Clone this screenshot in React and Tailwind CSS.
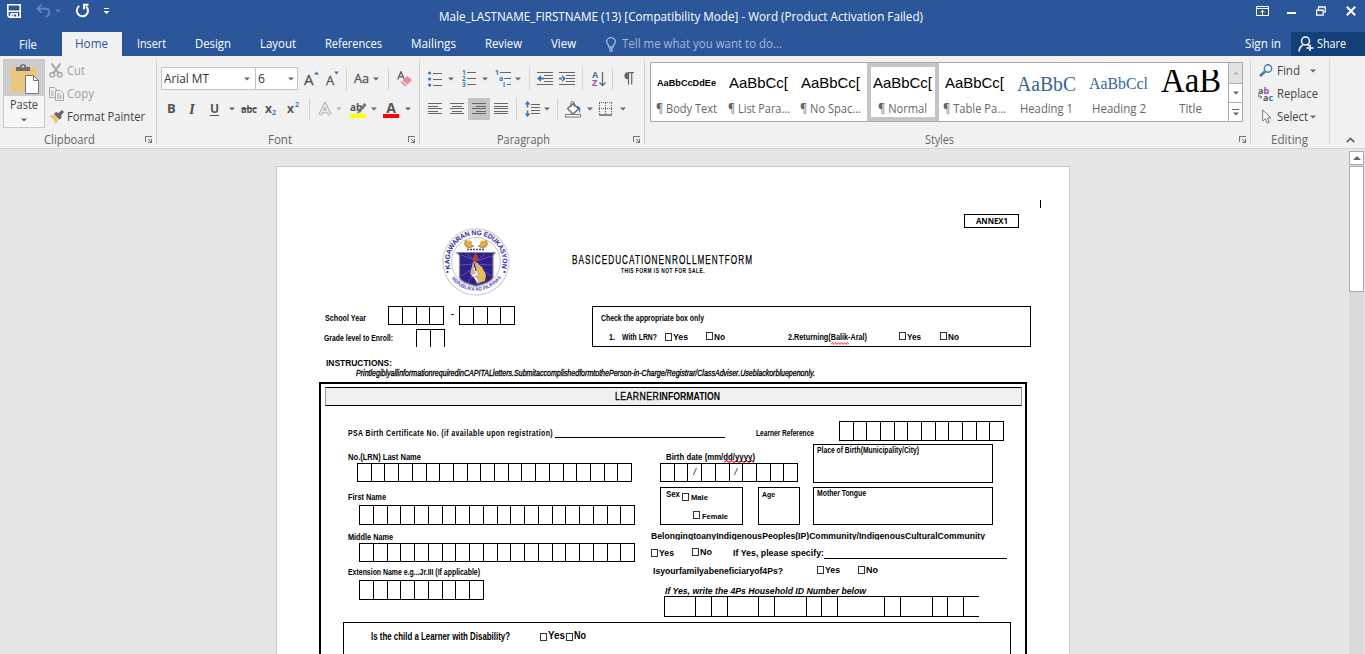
import { useLayoutEffect, useRef } from "react";

/* One line of text whose glyph run is fitted to the width given by its class. */
function Fit({ className = "", children }) {
  const outer = useRef(null);
  const inner = useRef(null);
  useLayoutEffect(() => {
    inner.current.style.transform = "none";
    const natural = inner.current.getBoundingClientRect().width;
    const room = outer.current.getBoundingClientRect().width;
    if (natural > 0) inner.current.style.transform = `scaleX(${room / natural})`;
  });
  return (
    <span ref={outer} className={`block shrink-0 whitespace-nowrap leading-[14px] ${className}`}>
      <span ref={inner} className="inline-block origin-left">{children}</span>
    </span>
  );
}

const Caret = ({ className = "" }) => (
  <svg className={`shrink-0 ${className}`} width="6" height="4" viewBox="0 0 6 4"><path d="M0 .5h6L3 3.5z" fill="#666" /></svg>
);
const Sep = ({ className = "" }) => <div className={`w-px shrink-0 bg-[#d2d2d2] ${className}`} />;
const Launcher = ({ className = "" }) => (
  <svg className={`shrink-0 ${className}`} width="8" height="8" viewBox="0 0 8 8" fill="none" stroke="#777" shapeRendering="crispEdges">
    <path d="M.5 6V.5H7" /><path d="M3 3l3 3" shapeRendering="auto" /><path d="M6.5 3v3.5H3" /><path d="M5 5h2v2H5z" fill="#777" stroke="none" />
  </svg>
);
const Cell = ({ className = "", children }) => <div className={`flex shrink-0 items-center ${className}`}>{children}</div>;

function TitleBar() {
  return (
    <div className="flex h-8 items-start">
      <svg className="mt-1 ml-[7px] shrink-0" width="14" height="14" viewBox="0 0 14 14" fill="none" stroke="#fff" strokeWidth="1.6">
        <path d="M.8.8h12.4v12.4H2.5L.8 11.6z" /><path d="M1 7.3h12M4 13v-3.2h6V13" /><path d="M6.2 10.5V13" strokeWidth="1.4" />
      </svg>
      <svg className="mt-1 ml-[15px] shrink-0" width="15" height="14" viewBox="0 0 15 14" fill="none" stroke="#5f83bd" strokeWidth="2">
        <path d="M5.5 0.8L1.5 4.6l4 4M2 4.7h7c6 0 5.5 6.5.5 8" />
      </svg>
      <svg className="mt-[9px] ml-1 shrink-0" width="6" height="4" viewBox="0 0 6 4"><path d="M0 .5h6L3 3.5z" fill="#5f83bd" /></svg>
      <svg className="mt-[3px] ml-[14px] shrink-0" width="15" height="15" viewBox="0 0 15 15" fill="none" stroke="#fff" strokeWidth="2">
        <path d="M4.3 3A5.6 5.6 0 1 0 11 3.4" /><path d="M13.5 1.8H9v4.4" />
      </svg>
      <svg className="mt-2 ml-[13px] shrink-0" width="7" height="6" viewBox="0 0 7 6" fill="#fff"><path d="M1 0h5v1H1zM.5 3h6l-3 3z" /></svg>
      <Fit className="mt-[10px] ml-[329px] w-[484px] text-[12px] text-white">Male_LASTNAME_FIRSTNAME (13) [Compatibility Mode] - Word (Product Activation Failed)</Fit>
      <svg className="mt-1.5 ml-[333px] shrink-0" width="13" height="10" viewBox="0 0 13 10" fill="none" stroke="#fff">
        <path d="M.5.5h12v9H.5zM.5 2.5h12M6.5 9V4.5M4.5 6.3l2-2 2 2" />
      </svg>
      <div className="mt-[12px] ml-[18px] h-[2px] w-[9px] shrink-0 bg-white" />
      <svg className="mt-1.5 ml-[20px] shrink-0" width="10" height="10" viewBox="0 0 10 10" fill="none" stroke="#fff" strokeWidth="1.2">
        <path d="M.6 4h6.6v5.2H.6zM.6 4.4h6.6M2.5 3.6V.8h6.8v5H7.5M2.5 1.2h6.8" />
      </svg>
      <svg className="mt-1.5 ml-[20px] shrink-0" width="10" height="10" viewBox="0 0 10 10" stroke="#fff" strokeWidth="2"><path d="M.8.8l8.4 8.4M9.2.8L.8 9.2" /></svg>
    </div>
  );
}

function TabBar() {
  return (
    <div className="flex h-6 items-center text-[12px] text-white">
      <Fit className="mt-px ml-[19px] w-[18px]">File</Fit>
      <div className="ml-[25px] flex h-6 w-[60px] shrink-0 items-center bg-[#f1f1f1] text-[#2b579a]"><Fit className="ml-[13px] w-[33px]">Home</Fit></div>
      <Fit className="ml-[15px] w-[29px]">Insert</Fit>
      <Fit className="ml-[29px] w-[36px]">Design</Fit>
      <Fit className="ml-[29px] w-[36px]">Layout</Fit>
      <Fit className="ml-[29px] w-[57px]">References</Fit>
      <Fit className="ml-[29px] w-[45px]">Mailings</Fit>
      <Fit className="ml-[29px] w-[37px]">Review</Fit>
      <Fit className="ml-[29px] w-[25px]">View</Fit>
      <svg className="ml-[30px] shrink-0" width="10" height="15" viewBox="0 0 10 15" fill="none" stroke="#a9bcdb" strokeWidth="1.3">
        <path d="M3 10C3 7.600.7 7 .7 4.800a4.300 4.100 0 0 1 8.600 0C9.300 7 7 7.600 7 10zM3 12h4M3.500 14h3" />
      </svg>
      <Fit className="ml-[6px] w-[160px] text-[#a3b8d9]">Tell me what you want to do...</Fit>
      <Fit className="ml-[463px] w-[36px]">Sign in</Fit>
      <div className="ml-[10px] flex h-6 w-[74px] shrink-0 items-center bg-[#124078]">
        <svg className="ml-[7px] shrink-0" width="16" height="16" viewBox="0 0 16 16" fill="none" stroke="#fff" strokeWidth="1.5">
          <circle cx="7.500" cy="5" r="4" /><path d="M1 15.500c.3-3.500 2-5.500 4-6.500M12 8.500v6.500M8.500 12h7M9.500 8.500l1.500 1.500" />
        </svg>
        <Fit className="ml-[3px] w-[29px]">Share</Fit>
      </div>
    </div>
  );
}

function ClipboardGroup() {
  return (
    <div className="flex h-[92px] w-[156px] shrink-0 flex-col">
      <div className="flex h-[75px]">
        <div className="mt-[3px] ml-[3px] flex h-[69px] w-[42px] shrink-0 flex-col items-center border border-[#c8c8c8] bg-[#f6f6f6]">
          <div className="flex h-9 w-full shrink-0 justify-center bg-[#cdcdcd]">
            <svg className="mt-[3px] ml-[3px]" width="29" height="32" viewBox="0 0 29 32">
              <path d="M0 4h25v25H0z" fill="#edc57b" /><path d="M5 8V4h4a3 3 0 0 1 6 0h4v4z" fill="#6d6d6d" /><circle cx="12" cy="3.500" r="1.300" fill="#cdcdcd" />
              <path d="M14.500 12.500h8l5 5v13h-13z" fill="#fff" stroke="#777" /><path d="M22.500 12.500v5h5" fill="none" stroke="#777" />
            </svg>
          </div>
          <Fit className="mt-[2px] w-[28px] text-[12px] text-[#444]">Paste</Fit>
          <Caret className="mt-[6px]" />
        </div>
        <div className="mt-[3px] ml-1 flex flex-col text-[12px] text-[#a0a0a0]">
          <div className="flex h-[23px] items-center">
            <svg width="14" height="15" viewBox="0 0 14 15" fill="none" stroke="#a5a5a5" strokeWidth="1.400">
              <path d="M2.500.5l7 9.500M11.500.5l-7 9.500" strokeWidth="2" /><circle cx="3.300" cy="11.800" r="2.300" /><circle cx="10.700" cy="11.800" r="2.300" />
            </svg>
            <Fit className="ml-[4px] w-[18px]">Cut</Fit>
          </div>
          <div className="flex h-[23px] items-center">
            <svg width="15" height="14" viewBox="0 0 15 14" fill="#f1f1f1" stroke="#a5a5a5">
              <path d="M.5.5h5l3 3v7h-8z" /><path d="M6.500 3.500h5l3 3v7h-8z" /><path d="M2 4h2M2 6h3M2 8h3M8 7h3M8 9h5M8 11h5" />
            </svg>
            <Fit className="ml-[3px] w-[27px]">Copy</Fit>
          </div>
          <div className="flex h-[23px] items-center text-[#444]">
            <svg width="15" height="14" viewBox="0 0 15 14">
              <path d="M0 6l5-1.500 5 5L6.500 14C5 10 3 8 0 6z" fill="#edc57b" /><path d="M5 4l2-2 2.500 1L13 0l2 2-3 3.500.7 2.200L10.500 9.500z" fill="#666" />
            </svg>
            <Fit className="ml-[3px] w-[78px]">Format Painter</Fit>
          </div>
        </div>
      </div>
      <div className="flex h-[17px] items-center text-[12px] text-[#666]"><Fit className="ml-[44px] w-[51px]">Clipboard</Fit><Launcher className="ml-[50px]" /></div>
    </div>
  );
}

function FontGroup() {
  return (
    <div className="flex h-[92px] w-[262px] shrink-0 flex-col text-[12px] text-[#555]">
      <div className="mt-[11px] ml-1 flex h-[23px] items-center">
        <Cell className="h-[23px] w-[95px] border border-[#c3c3c3] bg-white"><Fit className="ml-[2px] w-[45px] text-[#333]">Arial MT</Fit><Caret className="ml-[35px]" /></Cell>
        <Cell className="-ml-px h-[23px] w-[43px] border border-[#c3c3c3] bg-white"><Fit className="ml-[2px] w-[7px] text-[#333]">6</Fit><Caret className="ml-[23px]" /></Cell>
        <Cell className="ml-[6px] w-[22px]"><span className="text-[15px] leading-4 [-webkit-text-stroke:0.3px_#555]">A</span><svg className="-mt-3" width="5" height="4" viewBox="0 0 5 4"><path d="M0 3.500L2.500.5 5 3.500z" fill="#3a7ab8" /></svg></Cell>
        <Cell className="w-[20px]"><span className="mt-[2px] text-[13px] leading-4 [-webkit-text-stroke:0.3px_#555]">A</span><svg className="-mt-3" width="5" height="4" viewBox="0 0 5 4"><path d="M0 .5h5L2.500 3.500z" fill="#3a7ab8" /></svg></Cell>
        <Sep className="h-[22px]" />
        <Fit className="ml-[7px] w-[15px] [-webkit-text-stroke:0.3px_#555]">Aa</Fit><Caret className="ml-1" />
        <Sep className="ml-[9px] h-[22px]" />
        <svg className="ml-[8px] shrink-0" width="15" height="16" viewBox="0 0 15 16"><path d="M.7 8.500L4 .8 7.300 8.500M2 5.800h4" fill="none" stroke="#666" strokeWidth="1.400" /><path d="M3.500 11.500L10 5l5 4-6.500 6.500z" fill="#e88b9d" /><path d="M5 10l4.800 4" stroke="#fff" /></svg>
      </div>
      <div className="mt-[8px] ml-[10px] flex h-[22px] items-center">
        <Cell className="w-[22px]"><b className="text-[13px]">B</b></Cell>
        <Cell className="w-[21px]"><i className="font-['Liberation_Serif',serif] text-[15px] font-bold">I</i></Cell>
        <Cell className="w-[19px]"><span className="text-[12px] font-bold underline underline-offset-2">U</span></Cell>
        <Cell className="w-[12px]"><Caret /></Cell>
        <Cell className="w-[24px]"><Fit className="w-[16px] text-[11px] font-bold"><span className="line-through">abc</span></Fit></Cell>
        <Cell className="w-[22px]"><b className="text-[12px]">x</b><b className="mt-2 text-[7px] text-[#3a7ab8]">2</b></Cell>
        <Cell className="w-[22px]"><b className="text-[12px]">x</b><b className="-mt-2 ml-px text-[7px] text-[#3a7ab8]">2</b></Cell>
        <Sep className="h-[22px]" />
        <svg className="ml-[8px] shrink-0" width="14" height="15" viewBox="0 0 14 15" fill="none"><path d="M2 13L7 2.500 12 13M4 9.500h6" stroke="#b4b4b4" strokeWidth="3.600" /><path d="M2 13L7 2.500 12 13M4 9.500h6" stroke="#f1f1f1" strokeWidth="1.300" /></svg>
        <svg className="ml-1 shrink-0" width="6" height="4" viewBox="0 0 6 4"><path d="M.5.5h5L3 3.500z" fill="#b4b4b4" /></svg>
        <div className="mt-[2px] ml-[8px] flex w-[16px] shrink-0 flex-col">
          <div className="flex h-3"><span className="text-[10px] leading-[10px] font-bold">ab</span><svg width="8" height="12" viewBox="0 0 8 12" className="-ml-1 shrink-0 overflow-visible"><path d="M7.500 2L1 9.500" stroke="#777" strokeWidth="3" /><path d="M1 8l-2.500 4L3 10z" fill="#777" /></svg></div>
          <div className="h-1 bg-[#ff0]" />
        </div>
        <Caret className="ml-[5px]" />
        <div className="mt-[2px] ml-[6px] flex w-[16px] shrink-0 flex-col items-center"><span className="h-3 text-[14px] leading-[11px] font-bold">A</span><div className="h-1 w-4 bg-[#f00]" /></div>
        <Caret className="ml-[6px]" />
      </div>
      <div className="mt-[11px] flex h-[17px] items-center text-[#666]"><Fit className="ml-[111px] w-[24px]">Font</Fit><Launcher className="ml-[116px]" /></div>
    </div>
  );
}

function Lines({ rows, className = "" }) {
  return (
    <svg className={`shrink-0 ${className}`} width="14" height="12" viewBox="0 0 14 12" stroke="#666" shapeRendering="crispEdges">
      {rows.map(([a, b], i) => <path key={i} d={`M${a} ${i * 2.5 + 0.5}H${b}`} />)}
    </svg>
  );
}
const bar = "M0 .5h16M7 3.500h9M7 6.500h9M7 9.500h9M0 12.500h16";

function ParagraphGroup() {
  return (
    <div className="flex h-[92px] w-[224px] shrink-0 flex-col text-[12px] text-[#555]">
      <div className="mt-[11px] ml-[8px] flex h-[23px] items-center">
        <svg className="shrink-0" width="14" height="16" viewBox="0 0 14 16"><g fill="#3a7ab8"><circle cx="1.600" cy="2" r="1.600" /><circle cx="1.600" cy="8" r="1.600" /><circle cx="1.600" cy="14" r="1.600" /></g><path d="M5 2.500h9M5 8.500h9M5 14.500h9" stroke="#666" /></svg>
        <Caret className="ml-[6px]" />
        <svg className="ml-[8px] shrink-0 fill-[#3a7ab8] text-[6.500px] font-bold" width="14" height="17" viewBox="0 0 14 17"><text x="0" y="5">1</text><text x="0" y="11">2</text><text x="0" y="17">3</text><path d="M5 2.500h9M5 8.500h9M5 14.500h9" stroke="#666" /></svg>
        <Caret className="ml-[6px]" />
        <svg className="ml-[7px] shrink-0 fill-[#3a7ab8] text-[7px] font-bold" width="17" height="17" viewBox="0 0 17 17"><text x="0" y="5">1</text><text x="4" y="11">a</text><text x="8" y="17">i</text><path d="M5 2.500h11M9 8.500h7M12 14.500h4" stroke="#666" /></svg>
        <Caret className="ml-[3px]" />
        <Sep className="ml-[8px] h-[22px]" />
        <svg className="ml-[7px] shrink-0" width="16" height="13" viewBox="0 0 16 13"><path d={bar} stroke="#666" /><path d="M0 6.500L4 3v7zM3 5.500h4v2H3z" fill="#3a7ab8" /></svg>
        <svg className="ml-[6px] shrink-0" width="16" height="13" viewBox="0 0 16 13"><path d={bar} stroke="#666" /><path d="M7 6.500L3 3v7zM0 5.500h4v2H0z" fill="#3a7ab8" /></svg>
        <Sep className="ml-[7px] h-[22px]" />
        <div className="ml-[9px] flex w-[14px] shrink-0 items-center">
          <div className="flex w-[7px] flex-col text-[9px] leading-[8px] font-bold"><span className="text-[#3a7ab8]">A</span><span className="text-[#9150b0]">Z</span></div>
          <svg className="ml-px shrink-0" width="7" height="16" viewBox="0 0 7 16"><path d="M3.500 1v13M.5 11.500l3 3 3-3" fill="none" stroke="#666" strokeWidth="1.300" /></svg>
        </div>
        <Sep className="ml-[6px] h-[22px]" />
        <svg className="ml-[10px] shrink-0" width="11" height="13" viewBox="0 0 11 13"><path d="M4.500 0H11v1.200H4.500zM4.500 0a3.700 3.700 0 0 0 0 7.300H6V0z" fill="#666" /><path d="M5.500 0v12.500M8.700 0v12.500" stroke="#666" strokeWidth="1.200" /></svg>
      </div>
      <div className="mt-[8px] ml-[8px] flex h-[22px] items-center">
        <Lines rows={[[0, 14], [0, 10], [0, 14], [0, 10], [0, 14]]} />
        <Lines className="ml-[8px]" rows={[[0, 14], [2, 12], [0, 14], [2, 12], [0, 14]]} />
        <div className="ml-1 flex h-[22px] w-[22px] shrink-0 items-center justify-center bg-[#c5c5c5]"><Lines rows={[[0, 14], [4, 14], [0, 14], [4, 14], [0, 14]]} /></div>
        <Lines className="ml-1" rows={[[0, 14], [0, 14], [0, 14], [0, 14], [0, 14]]} />
        <Sep className="ml-[8px] h-[22px]" />
        <svg className="ml-[8px] shrink-0" width="15" height="16" viewBox="0 0 15 16"><path d="M6 3.500h9M6 6.500h9M6 9.500h9M6 12.500h9" stroke="#666" /><path d="M2.500 1v5.500M.5 3.500l2-2.500 2 2.500M2.500 9.500V15M.5 12.500l2 2.500 2-2.500" fill="none" stroke="#3a7ab8" strokeWidth="1.500" /></svg>
        <Caret className="ml-[4px]" />
        <Sep className="ml-[7px] h-[22px]" />
        <svg className="ml-[7px] shrink-0" width="17" height="17" viewBox="0 0 17 17"><path d="M2.500 7.500l6-5 5 5.500-5.500 5z" fill="#fff" stroke="#666" strokeWidth="1.300" /><path d="M6 6V1.500c0-1.500 3-1.500 3 0V6" fill="none" stroke="#666" /><path d="M12 5c4 0 4 4 2.500 7.500C14.500 10 14 8.500 12 7z" fill="#3a7ab8" /><path d="M.5 13.500h15v2.500H.5z" fill="#fff" stroke="#777" /></svg>
        <Caret className="ml-[5px]" />
        <svg className="ml-[6px] shrink-0" width="13" height="14" viewBox="0 0 13 14" fill="none" stroke="#666"><path d="M.5 1v11M6.500 1v11M12.500 1v11M0 .5h13M0 6.500h13" strokeDasharray="1 1" /><path d="M0 13h13" strokeWidth="1.500" /></svg>
        <Caret className="ml-[8px]" />
      </div>
      <div className="mt-[11px] flex h-[17px] items-center text-[#666]"><Fit className="ml-[77px] w-[53px]">Paragraph</Fit><Launcher className="ml-[83px]" /></div>
    </div>
  );
}

const normal = "mt-[6px] w-[59px] font-['Liberation_Sans',sans-serif] text-[14.500px]";
const styles = [
  ["AaBbCcDdEe", "¶ Body Text", "mt-[6px] w-[59px] font-['Liberation_Sans',sans-serif] text-[9px] font-bold", "w-[61px]"],
  ["AaBbCc[", "¶ List Para...", normal, "w-[62px]"],
  ["AaBbCc[", "¶ No Spac...", normal, "w-[61px]"],
  ["AaBbCc[", "¶ Normal", normal, "w-[49px]"],
  ["AaBbCc[", "¶ Table Pa...", normal, "w-[63px]"],
  ["AaBbC", "Heading 1", "mt-[7px] w-[59px] font-['Liberation_Serif',serif] text-[20px] text-[#36649a]", "w-[53px]"],
  ["AaBbCcl", "Heading 2", "mt-[7px] w-[59px] font-['Liberation_Serif',serif] text-[17px] text-[#36649a]", "w-[54px]"],
  ["AaB", "Title", "mt-[3px] w-[60px] font-['Liberation_Serif',serif] text-[36px]", "w-[23px]"],
];

function StylesGroup() {
  return (
    <div className="flex h-[92px] w-[605px] shrink-0 flex-col">
      <div className="mt-[6px] ml-[5px] flex h-[60px] w-[593px] border border-[#ababab] bg-white">
        <div className="flex w-[576px] shrink-0">
          {styles.map(([sample, name, look, width], i) => (
            <div key={i} className={`flex w-[72px] shrink-0 flex-col items-center border-4 pr-px ${i === 3 ? "border-[#c5c5c5]" : "border-transparent"}`}>
              <div className="mt-[3px] flex h-[27px] shrink-0 items-start overflow-hidden text-black"><Fit className={look}>{sample}</Fit></div>
              <Fit className={`mt-[5px] text-[12px] text-[#666] ${width}`}>{name}</Fit>
            </div>
          ))}
        </div>
        <div className="ml-auto flex w-[14px] shrink-0 flex-col border-l border-[#ababab]">
          <div className="flex h-[21px] items-center justify-center border-b border-[#ababab] bg-[#e1e1e1]"><svg width="6" height="4" viewBox="0 0 6 4"><path d="M0 3.500h6L3 .5z" fill="#b5b5b5" /></svg></div>
          <div className="flex h-[19px] items-center justify-center border-b border-[#ababab]"><Caret /></div>
          <div className="flex h-[18px] flex-col items-center justify-center"><div className="h-px w-[7px] bg-[#666]" /><Caret className="mt-[2px]" /></div>
        </div>
      </div>
      <div className="mt-[9px] flex h-[17px] items-center text-[12px] text-[#666]"><Fit className="ml-[280px] w-[29px]">Styles</Fit><Launcher className="ml-[285px]" /></div>
    </div>
  );
}

function EditingGroup() {
  return (
    <div className="flex h-[92px] w-[78px] shrink-0 flex-col pt-[3px] text-[12px] text-[#444]">
      <Cell className="h-[23px]">
        <svg className="ml-[8px]" width="14" height="13" viewBox="0 0 14 13" fill="none" stroke="#3a7ab8"><circle cx="9" cy="4.500" r="3.700" strokeWidth="1.400" /><path d="M6 7.500L1 12" strokeWidth="2.600" /></svg>
        <Fit className="ml-1 w-[23px]">Find</Fit><Caret className="ml-[10px]" />
      </Cell>
      <Cell className="h-[23px]">
        <div className="ml-[7px] flex w-[16px] shrink-0 flex-col text-[9px] leading-[7px] font-bold text-[#555]">
          <div>a<span className="text-[#9150b0]">b</span></div>
          <div className="flex"><svg className="shrink-0" width="5" height="6" viewBox="0 0 5 6"><path d="M.8 0v3h3M2.500 1.500L4 3 2.500 4.500" fill="none" stroke="#3a7ab8" /></svg>a<span className="text-[#3a7ab8]">c</span></div>
        </div>
        <Fit className="ml-[3px] w-[41px]">Replace</Fit>
      </Cell>
      <Cell className="h-[23px]">
        <svg className="ml-[11px]" width="10" height="15" viewBox="0 0 10 15"><path d="M.7 1v11l2.600-2.300 2 4.500 2-1-2-4.200H9z" fill="#fff" stroke="#777" /></svg>
        <Fit className="ml-[5px] w-[31px]">Select</Fit><Caret className="ml-[2px]" />
      </Cell>
      <div className="mt-[3px] flex h-[17px] items-center text-[#666]"><Fit className="ml-[20px] w-[37px]">Editing</Fit></div>
    </div>
  );
}

function Ribbon() {
  return (
    <div className="flex h-[93px] shrink-0 border-b border-[#d2d2d2] bg-[#f1f1f1]">
      <ClipboardGroup /><Sep className="mt-1 h-[84px]" />
      <FontGroup /><Sep className="mt-1 h-[84px]" />
      <ParagraphGroup /><Sep className="mt-1 h-[84px]" />
      <StylesGroup /><Sep className="mt-1 h-[84px]" />
      <EditingGroup /><Sep className="mt-1 h-[84px]" />
      <svg className="mt-[81px] ml-4 shrink-0" width="9" height="6" viewBox="0 0 9 6" fill="none" stroke="#666" strokeWidth="1.800"><path d="M.7 5.200L4.500 1.400l3.800 3.800" /></svg>
    </div>
  );
}

/* A strip of equal writing cells. */
function Boxes({ n, className, marks = {} }) {
  return (
    <div className={`flex shrink-0 border border-black ${className}`}>
      {Array.from({ length: n }, (_, i) => (
        <div key={i} className={`flex flex-1 items-center justify-center text-[9px] leading-none font-normal italic ${i < n - 1 ? "border-r border-black" : ""}`}>{marks[i]}</div>
      ))}
    </div>
  );
}
const Box = ({ className = "" }) => <div className={`h-[8px] w-[7px] shrink-0 border border-[#333] ${className}`} />;
const Wavy = ({ className }) => (
  <svg className={className} height="3" preserveAspectRatio="none" viewBox="0 0 24 3"><path d="M0 2.500L2 .5l2 2 2-2 2 2 2-2 2 2 2-2 2 2 2-2 2 2 2-2 2 2" fill="none" stroke="#f00" strokeWidth=".9" /></svg>
);

function Seal() {
  return (
    <svg className="shrink-0" width="68" height="68" viewBox="0 0 68 68">
      <defs>
        <path id="top" d="M12.500 49A26.500 26.500 0 1 1 55.500 49" />
        <path id="bottom" d="M6.500 45.500A30.500 30.500 0 0 0 61.500 45.500" />
      </defs>
      <circle cx="34" cy="34" r="33" fill="#fff" stroke="#d2d4d8" strokeWidth="1.300" />
      <circle cx="34" cy="34" r="24.500" fill="#fdfdfd" stroke="#c2c4cc" />
      <text fill="#3528a5" fontSize="6.800" fontWeight="700"><textPath href="#top" startOffset="9" textLength="97" lengthAdjust="spacing">KAGAWARAN NG EDUKASYON</textPath></text>
      <text fill="#5548b5" fontSize="5" fontWeight="700"><textPath href="#bottom" startOffset="6" textLength="58" lengthAdjust="spacingAndGlyphs">REPUBLIKA NG PILIPINAS</textPath></text>
      <circle cx="5.500" cy="44" r="1.100" fill="#3528a5" /><circle cx="62.500" cy="44" r="1.100" fill="#3528a5" />
      <path d="M24 12c-3 4-1 8 4 8l4-2c-3-1-6-2-8-6zM44 12c3 4 1 8-4 8l-4-2c3-1 6-2 8-6z" fill="#d9a03c" stroke="#a97a2a" strokeWidth=".6" />
      <circle cx="27" cy="15.500" r="3" fill="#e0ab4a" /><circle cx="41" cy="15.500" r="3" fill="#e0ab4a" />
      <path d="M25 21.500h18" stroke="#4b429a" strokeWidth="1.400" strokeDasharray="2 1" />
      <path d="M15 24.500h38l-2 3v22q-2 5-17 8.500Q19 54.500 17.500 49.500v-22z" fill="#30208a" stroke="#8d8d9b" strokeWidth="1.200" />
      <path d="M34 33L19 27M34 33L25 26M34 33L43 26M34 33L50 28M34 36L18 37M34 36L50 37M34 39L19 48M34 39L50 48M34 39L26 55M34 39L42 54" stroke="#6f66bb" strokeWidth=".7" />
      <path d="M31 31c0-4 2-3 2-6 3 3 4 5 2 8l-1 3h-3z" fill="#ad4433" /><path d="M31 34l5 1 1 8 5 3-2 8-5 2-3-7-4-3z" fill="#d3b19c" />
      <path d="M36 36l4 3 4 8-1 6-4 1-3-3 2-5-3-4z" fill="#e6bd55" /><path d="M32 40l3 6-5 2M32 49l4 4" stroke="#fff" strokeWidth="1.500" fill="none" /><path d="M32 35l2 8" stroke="#1e1748" strokeWidth="1" />
    </svg>
  );
}

function Header() {
  return (
    <>
      <div className="mt-[33px] ml-[763px] h-[8px] w-px shrink-0 bg-black" />
      <div className="mt-[6px] ml-[687px] flex h-[14px] w-[55px] shrink-0 items-center justify-center border border-black"><Fit className="w-[32px] font-['Open_Sans',sans-serif] text-[8px] font-bold">ANNEX1</Fit></div>
      <div className="flex h-[78px] shrink-0">
        <div className="ml-[165px]"><Seal /></div>
        <div className="mt-[25px] ml-[62px] flex flex-col items-center">
          <Fit className="w-[181px] text-[12px] tracking-[1.500px] [-webkit-text-stroke:0.25px_black]">BASICEDUCATIONENROLLMENTFORM</Fit>
          <Fit className="-mt-[3px] w-[84px] text-[6.500px] font-bold tracking-[0.700px]">THIS FORM IS NOT FOR SALE.</Fit>
        </div>
      </div>
      <div className="flex h-[41px] shrink-0 text-[9px] font-bold">
        <div className="ml-[47px] flex w-[268px] shrink-0 flex-col">
          <div className="flex h-[23px] items-start"><Fit className="mt-[5px] ml-px w-[41px]">School Year</Fit><Boxes n={4} className="ml-[22px] h-[19px] w-[56px]" /><span className="mt-[2px] ml-[7px] w-2 shrink-0">-</span><Boxes n={4} className="h-[19px] w-[56px]" /></div>
          <div className="flex h-[18px] items-start"><Fit className="mt-[2px] w-[69px]">Grade level to Enroll:</Fit><Boxes n={2} className="ml-[23px] h-[18px] w-[29px] border-b-0" /></div>
        </div>
        <div className="flex w-[439px] shrink-0 flex-col border border-black">
          <Fit className="mt-[4px] ml-[8px] w-[103px]">Check the appropriate box only</Fit>
          <div className="mt-[4px] flex h-4 items-center">
            <Fit className="ml-[16px] w-[6px]">1.</Fit><Fit className="ml-[7px] w-[35px]">With LRN?</Fit>
            <Box className="ml-[8px]" /><Fit className="ml-px w-[15px]">Yes</Fit><Box className="-mt-[2px] ml-[18px]" /><Fit className="-mt-px ml-px w-[11px]">No</Fit>
            <Fit className="ml-[63px] w-[79px]">2.Returning(Balik-Aral)</Fit>
            <Wavy className="mt-3 -ml-[36px] w-[18px] shrink-0" />
            <Box className="-mt-[2px] ml-[50px]" /><Fit className="-mt-px ml-px w-[14px]">Yes</Fit><Box className="-mt-[2px] ml-[19px]" /><Fit className="-mt-px ml-px w-[11px]">No</Fit>
          </div>
        </div>
      </div>
      <Fit className="mt-[9px] ml-[49px] w-[66px] text-[9px] font-bold">INSTRUCTIONS:</Fit>
      <Fit className="-mt-[4px] ml-[79px] w-[459px] text-[9px] italic [-webkit-text-stroke:0.35px_black]">PrintlegiblyallinformationrequiredinCAPITALletters.SubmitaccomplishedformtothePerson-in-Charge/Registrar/ClassAdviser.Useblackorbluepenonly.</Fit>
    </>
  );
}

function NameFields() {
  return (
    <div className="flex w-[329px] shrink-0 flex-col">
      <Fit className="mt-[9px] ml-[27px] w-[73px]">No.(LRN) Last Name</Fit>
      <Boxes n={20} className="-mt-px ml-[36px] h-[19px] w-[275px]" />
      <Fit className="mt-[8px] ml-[27px] w-[38px]">First Name</Fit>
      <Boxes n={20} className="mt-px ml-[38px] h-[20px] w-[276px]" />
      <Fit className="mt-[5px] ml-[27px] w-[45px]">Middle Name</Fit>
      <Boxes n={20} className="-mt-px ml-[38px] h-[19px] w-[276px]" />
      <Fit className="mt-[3px] ml-[27px] w-[132px]">Extension Name e.g...Jr.III (If applicable)</Fit>
      <Boxes n={9} className="mt-px ml-[38px] h-[20px] w-[125px]" />
    </div>
  );
}

const idCells = ["w-[31px]", "w-[16px]", "w-[16px]", "w-[31px]", "w-[16px]", "w-[32px]", "w-[15px]", "w-[16px]", "w-[47px]", "w-[16px]", "w-[32px]", "w-[15px]", "w-[16px]"];

function DetailFields() {
  return (
    <div className="flex w-[374px] shrink-0 flex-col">
      <div className="flex h-[84px]">
        <div className="flex w-[163px] shrink-0 flex-col">
          <Fit className="mt-[9px] ml-[16px] w-[89px]">Birth date (mm/dd/yyyy)</Fit>
          <Wavy className="-mt-[4px] ml-[74px] w-[30px] shrink-0" />
          <Boxes n={10} marks={{ 2: "/", 5: "/" }} className="ml-[10px] h-[19px] w-[138px]" />
          <div className="mt-[5px] ml-[10px] flex">
            <div className="flex h-[38px] w-[83px] shrink-0 flex-col border border-black">
              <div className="flex h-[18px] items-start"><Fit className="-mt-px ml-[5px] w-[14px]">Sex</Fit><Box className="mt-[5px] ml-[2px]" /><Fit className="mt-[3px] ml-[2px] w-[17px] text-[8px]">Male</Fit></div>
              <div className="flex items-center"><Box className="ml-[32px]" /><Fit className="mt-1 ml-[2px] w-[26px] text-[8px]">Female</Fit></div>
            </div>
            <div className="ml-[15px] h-[38px] w-[42px] shrink-0 border border-black"><Fit className="ml-[3px] w-[13px] text-[8px]">Age</Fit></div>
          </div>
        </div>
        <div className="flex w-[180px] shrink-0 flex-col pt-[3px]">
          <div className="h-[39px] border border-black"><Fit className="-mt-[2px] ml-[3px] w-[102px]">Place of Birth(Municipality/City)</Fit></div>
          <div className="mt-[4px] h-[38px] border border-black"><Fit className="-mt-[2px] ml-[3px] w-[49px]">Mother Tongue</Fit></div>
        </div>
      </div>
      <div className="mt-[4px] h-[11px] shrink-0 overflow-hidden"><Fit className="ml-px w-[334px]">BelongingtoanyIndigenousPeoples(IP)Community/IndigenousCulturalCommunity</Fit></div>
      <div className="mt-[6px] flex h-[14px] items-center">
        <Box className="ml-px" /><Fit className="ml-px w-[15px]">Yes</Fit><Box className="-mt-[2px] ml-[18px]" /><Fit className="-mt-[2px] ml-px w-[12px]">No</Fit>
        <Fit className="ml-[21px] w-[91px]">If Yes, please specify:</Fit><div className="mt-[11px] h-px w-[183px] shrink-0 bg-black" />
      </div>
      <div className="mt-[4px] flex h-[14px] items-center">
        <Fit className="ml-[3px] w-[130px]">Isyourfamilyabeneficiaryof4Ps?</Fit><Box className="-mt-[2px] ml-[34px]" /><Fit className="-mt-[2px] ml-px w-[15px]">Yes</Fit><Box className="-mt-[2px] ml-[18px]" /><Fit className="-mt-[2px] ml-px w-[12px]">No</Fit>
      </div>
      <Fit className="mt-[6px] ml-[15px] w-[201px] italic">If Yes, write the 4Ps Household ID Number below</Fit>
      <div className="-mt-[2px] ml-[14px] flex h-[21px] w-[315px] shrink-0 border-y border-l border-black">
        {idCells.map((w, i) => <div key={i} className={`shrink-0 border-r border-black ${w}`} />)}
      </div>
    </div>
  );
}

function LearnerForm() {
  return (
    <div className="mt-[2px] ml-[42px] h-[290px] w-[708px] shrink-0 border-2 border-b-0 border-black text-[9px] font-bold">
      <div className="mt-[3px] ml-1 flex h-[19px] w-[697px] items-center border border-x-[#999] border-y-black bg-[#f0f0f0]">
        <Fit className="ml-[289px] w-[105px] text-[10px]"><span className="font-normal tracking-[0.500px] [-webkit-text-stroke:0.3px_black]">LEARNER</span>INFORMATION</Fit>
      </div>
      <div className="flex h-[35px] items-start">
        <Fit className="mt-[20px] ml-[27px] w-[205px] tracking-[0.500px]">PSA Birth Certificate No. (if available upon registration)</Fit>
        <div className="mt-[31px] ml-[2px] h-px w-[170px] shrink-0 bg-black" />
        <Fit className="mt-[20px] ml-[31px] w-[58px]">Learner Reference</Fit>
        <Boxes n={12} className="mt-[15px] ml-[25px] h-[20px] w-[165px]" />
      </div>
      <div className="flex h-[181px]"><NameFields /><DetailFields /></div>
      <div className="ml-[22px] flex h-[60px] w-[668px] items-start border border-b-0 border-black text-[10px]">
        <Fit className="mt-[7px] ml-[27px] w-[139px]">Is the child a Learner with Disability?</Fit><Box className="mt-[10px] ml-[30px]" /><Fit className="mt-[6px] ml-px w-[17px]">Yes</Fit><Box className="mt-[10px] ml-px" /><Fit className="mt-[6px] ml-px w-[12px]">No</Fit>
      </div>
    </div>
  );
}

export default function App() {
  return (
    <div className="flex h-[654px] w-[1365px] flex-col overflow-hidden bg-[#e6e6e6] font-['Open_Sans','Noto_Sans',sans-serif]">
      <div className="h-14 shrink-0 bg-[#2b579a]"><TitleBar /><TabBar /></div>
      <Ribbon />
      <div className="flex h-[505px] justify-between">
        <main className="mt-[17px] ml-[276px] flex h-[488px] w-[794px] flex-col overflow-hidden border border-b-0 border-[#c6c6c6] bg-white font-['Liberation_Sans',Arial,sans-serif] text-black">
          <Header />
          <LearnerForm />
        </main>
        <div className="mt-[2px] mr-px flex w-[15px] shrink-0 flex-col bg-[#dadada]">
          <div className="flex h-[14px] shrink-0 items-center justify-center border border-[#ababab] bg-white"><svg width="8" height="4" viewBox="0 0 8 4"><path d="M4 0l4 4H0z" fill="#666" /></svg></div>
          <div className="mt-px h-[126px] shrink-0 border border-[#ababab] bg-white" />
        </div>
      </div>
    </div>
  );
}
